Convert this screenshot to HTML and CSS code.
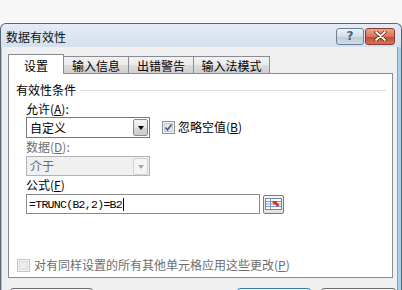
FILE: index.html
```html
<!DOCTYPE html>
<html lang="zh-CN">
<head>
  <meta charset="UTF-8">
  <meta name="viewport" content="width=device-width, initial-scale=1.0">
  <title>数据有效性</title>
  <link rel="stylesheet" href="styles.css">
</head>
<body>
  <div class="window">
    <div class="titlebar">
      <span class="title">数据有效性</span>
      <div class="caption-btns">
        <div class="cap-btn help">?</div>
        <div class="cap-btn close">
          <svg width="13" height="10" viewBox="0 0 13 10">
            <path d="M2 1 L11 9 M11 1 L2 9" stroke="#5b2318" stroke-width="3.4" stroke-linecap="round"/>
            <path d="M2 1 L11 9 M11 1 L2 9" stroke="#fff" stroke-width="1.8" stroke-linecap="round"/>
          </svg>
        </div>
      </div>
    </div>

    <div class="client">
      <div class="tabs">
        <div class="tab active">设置</div>
        <div class="tab w65">输入信息</div>
        <div class="tab w66">出错警告</div>
        <div class="tab w77">输入法模式</div>
      </div>

      <div class="panel">
        <div class="group-title"><span>有效性条件</span></div>

        <div class="fields">
          <div class="label first">允许(<u>A</u>):</div>
          <div class="row">
            <div class="combo">
              <span class="combo-text">自定义</span>
              <span class="drop"><span class="arrow"></span></span>
            </div>
            <div class="check">
              <svg class="box" width="13" height="13" viewBox="0 0 13 13">
                <rect x="0.5" y="0.5" width="12" height="12" fill="#f4f4f4" stroke="#8e8f8f"/>
                <rect x="2.5" y="2.5" width="8" height="8" fill="#e2e6ec" stroke="#c5cbd3"/>
                <path d="M3.5 6.5 L5.5 8.8 L9.6 3.4" fill="none" stroke="#4c6189" stroke-width="1.7"/>
              </svg>
              <span>忽略空值(<u>B</u>)</span>
            </div>
          </div>

          <div class="label disabled">数据(<u>D</u>):</div>
          <div class="combo off">
            <span class="combo-text">介于</span>
            <span class="drop"><span class="arrow"></span></span>
          </div>

          <div class="label">公式(<u>F</u>)</div>
          <div class="row">
            <div class="edit"><span class="mono">=TRUNC(B2,2)=B2</span><span class="caret"></span></div>
            <div class="ref-btn">
              <svg width="17" height="12" viewBox="0 0 17 12">
                <rect x="0.5" y="0.5" width="16" height="11" fill="#fff" stroke="#6f86a8"/>
                <path d="M1 3.5 H16 M1 6 H16 M1 8.5 H16" stroke="#7d9cc9"/>
                <path d="M5.5 1 V11" stroke="#7d9cc9"/>
                <path d="M7 3 L12 3 L12 4.5 L14.5 7 L12.5 9 L10 6.5 L8.5 6.5 Z" fill="#d23a2c"/>
              </svg>
            </div>
          </div>
        </div>

        <div class="check bottom">
          <svg class="box" width="13" height="13" viewBox="0 0 13 13">
            <rect x="0.5" y="0.5" width="12" height="12" fill="#f4f4f4" stroke="#c4c4c4"/>
            <rect x="2.5" y="2.5" width="8" height="8" fill="#ececec" stroke="#dcdcdc"/>
          </svg>
          <span class="disabled">对有同样设置的所有其他单元格应用这些更改(<u>P</u>)</span>
        </div>
      </div>

      <div class="buttons">
        <div class="btn clear"></div>
        <div class="btn ok"></div>
        <div class="btn cancel"></div>
      </div>
    </div>
  </div>
</body>
</html>
```

FILE: styles.css
```css
* {
  box-sizing: border-box;
}

body {
  margin: 0;
  width: 402px;
  height: 290px;
  overflow: hidden;
  background: #f7f7f7;
  font-family: "Noto Sans CJK SC", "Noto Sans", sans-serif;
  font-size: 12px;
  color: #000;
}

u {
  text-decoration: underline;
  text-underline-offset: 1px;
}

.window {
  margin-top: 23px;
  height: 267px;
  overflow: hidden;
  border: 1px solid #5a6572;
  border-bottom: none;
  border-radius: 6px 6px 0 0;
  background: #a6d2ef;
  display: flex;
  flex-direction: column;
}

.titlebar {
  flex: none;
  height: 23px;
  display: flex;
  align-items: center;
  justify-content: space-between;
  padding: 2px 6px 0 5px;
  background: linear-gradient(#e4ecf5, #d4e0ed);
  border-radius: 5px 5px 0 0;
}

.title {
  line-height: 14px;
  color: #111;
}

.caption-btns {
  display: flex;
  gap: 1px;
  margin-top: -1px;
}

.cap-btn {
  height: 17px;
  border: 1px solid #6d7f93;
  border-radius: 3px;
  display: flex;
  align-items: center;
  justify-content: center;
}

.help {
  width: 28px;
  background: linear-gradient(#eef3f8, #d3dde8 50%, #bdcbda 51%, #cfdce9);
  color: #50606f;
  font-family: "DejaVu Sans", sans-serif;
  font-size: 12px;
  font-weight: bold;
}

.close {
  width: 30px;
  border-color: #8a3b2c;
  background: linear-gradient(#eaa592, #d8735d 50%, #c44a30 51%, #d3735a);
}

.client {
  flex: 1;
  margin: 0 3px 0 0;
  border-left: 1px solid #b6c0cc;
  border-right: 1px solid #8d9bab;
  background: #f0f0f0;
  padding: 7px 0 0 6px;
}

.tabs {
  display: flex;
  align-items: flex-end;
  height: 19px;
  position: relative;
  z-index: 1;
}

.tab {
  height: 17px;
  margin-right: -1px;
  border: 1px solid #898c95;
  border-bottom: none;
  background: linear-gradient(#f2f2f2, #ebebeb 50%, #dddddd 51%, #cfcfcf);
  text-align: center;
  line-height: 17px;
  color: #000;
}

.tab.active {
  width: 56px;
  height: 20px;
  margin-bottom: -1px;
  padding-top: 2px;
  background: #fff;
  position: relative;
  z-index: 2;
}

.w65 { width: 66px; }
.w66 { width: 66px; }
.w77 { width: 77px; }

.panel {
  width: 385px;
  height: 205px;
  border: 1px solid #898c95;
  background: #fff;
  padding: 9px 6px 5px 7px;
  display: flex;
  flex-direction: column;
}

.group-title {
  display: flex;
  align-items: center;
  line-height: 14px;
}

.group-title::after {
  content: "";
  flex: 1;
  height: 1px;
  margin-left: 4px;
  background: #d5dce2;
}

.fields {
  padding-left: 10px;
}

.label {
  line-height: 14px;
  margin-top: 2px;
}

.label.first {
  margin-top: 5px;
}

.disabled {
  color: #6d6d6d;
}

.row {
  display: flex;
  align-items: center;
}

.combo {
  width: 124px;
  height: 21px;
  margin-top: 1px;
  border: 1px solid #7a7a7a;
  background: #fff;
  display: flex;
  align-items: center;
  justify-content: space-between;
  padding: 0 1px 0 3px;
}

.combo-text {
  line-height: 14px;
}

.drop {
  width: 15px;
  height: 17px;
  border: 1px solid #8c8c8c;
  border-radius: 2px;
  background: linear-gradient(#f4f4f4, #e6e6e6 50%, #d8d8d8 51%, #cdcdcd);
  display: flex;
  align-items: center;
  justify-content: center;
}

.arrow {
  width: 0;
  height: 0;
  border-left: 3.5px solid transparent;
  border-right: 3.5px solid transparent;
  border-top: 4px solid #000;
  margin-top: 1px;
}

.combo.off {
  height: 20px;
  margin-top: 2px;
  border-color: #b0b4b8;
  background: #f0f0f0;
  color: #6d6d6d;
}

.combo.off .drop {
  border-color: #cfd2d5;
  background: #f4f4f4;
}

.combo.off .arrow {
  border-top-color: #a8a8a8;
}

.check {
  display: flex;
  align-items: center;
  gap: 3px;
  line-height: 14px;
  margin-left: 12px;
}

.check.bottom {
  margin-top: auto;
  margin-left: 1px;
  gap: 4px;
}

.edit {
  width: 234px;
  height: 20px;
  margin-top: 2px;
  border: 1px solid #8a8a8a;
  background: #fff;
  display: flex;
  align-items: center;
  padding-left: 2px;
}

.mono {
  font-family: "Liberation Mono", monospace;
  font-size: 11.5px;
  letter-spacing: -0.7px;
}

.caret {
  width: 1px;
  height: 13px;
  margin-left: 1px;
  background: #000;
}

.ref-btn {
  width: 21px;
  height: 19px;
  margin: 2px 0 0 3px;
  border: 1px solid #7b7b7b;
  border-radius: 2px;
  background: linear-gradient(#f6f6f6, #e2e2e2);
  display: flex;
  align-items: center;
  justify-content: center;
}

.buttons {
  display: flex;
  margin-top: 10px;
  padding-left: 2px;
}

.btn {
  height: 23px;
  border: 1px solid #707070;
  border-radius: 3px;
  background: linear-gradient(#f2f2f2, #ebebeb 50%, #dddddd 51%, #cfcfcf);
}

.btn.clear {
  width: 83px;
}

.btn.ok {
  width: 74px;
  margin-left: 144px;
  border-color: #3c7fb1;
  background: linear-gradient(#eaf6fd, #d9f0fc 50%, #bee6fd 51%, #a7d9f5);
}

.btn.cancel {
  width: 75px;
  margin-left: 10px;
}
```
